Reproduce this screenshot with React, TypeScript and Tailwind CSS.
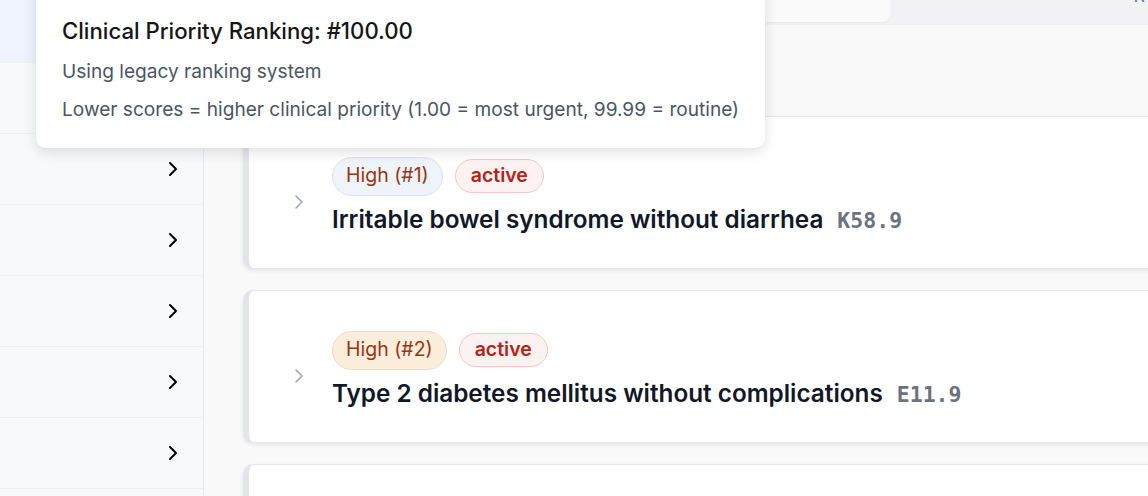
import React from "react";

const Chevron = ({ className, sw = 2 }: { className?: string; sw?: number }) => (
  <svg width="24" height="24" viewBox="0 0 24 24" fill="none" stroke="currentColor" strokeWidth={sw} strokeLinecap="round" strokeLinejoin="round" className={className}>
    <path d="m9 18 6-6-6-6" />
  </svg>
);

const cards = [
  { rank: "High (#1)", rankCls: "bg-[#eff4fb] border-[#dde3ec]", title: "Irritable bowel syndrome without diarrhea", code: "K58.9" },
  { rank: "High (#2)", rankCls: "bg-[#fdeedb] border-[#e6ddd2]", title: "Type 2 diabetes mellitus without complications", code: "E11.9" },
  { rank: "", rankCls: "", title: "", code: "" },
];

export default function App() {
  return (
    <div className="relative w-[1148px] h-[496px] overflow-hidden flex font-['Inter',sans-serif]">
      <aside className="w-[204px] shrink-0 bg-[#f8f9fb] border-r border-[#e5e7eb] flex flex-col">
        <div className="h-[63px] shrink-0 bg-[#eef3fd] border-b border-[#eef0f2]" />
        {[0, 1, 2, 3, 4, 5].map((i) => (
          <div key={i} className="h-[71px] shrink-0 border-b border-[#eef0f2] flex items-center justify-end pr-[18px]">
            {i > 0 && <Chevron className="text-black" />}
          </div>
        ))}
      </aside>
      <main className="flex-1 bg-[#f9f9f9] flex flex-col min-w-0">
        <div className="h-[25px] shrink-0 bg-[#f2f2f5] flex">
          <div className="ml-[20px] w-[666px] h-[22px] bg-[#fafafa] rounded-br-[8px] shadow-[0_1px_2px_rgba(0,0,0,0.04)]" />
          <div className="flex-1 relative overflow-hidden">
            <span className="absolute right-[3px] top-[-14px] text-[18px] leading-[20px] text-[#6b7280]">R</span>
          </div>
        </div>
        <div className="h-[91px] shrink-0" />
        <div className="pl-[39px] flex flex-col gap-[21px] w-[1000px]">
          {cards.map((c, i) => (
            <div key={i} className="h-[153px] shrink-0 bg-white rounded-[10px] border border-[#e5e7eb] border-l-[6px] border-l-[#e4e5ea] shadow-[0_2px_4px_rgba(0,0,0,0.08)] flex items-center pl-[38px]">
              {c.title && (
                <>
                  <Chevron className="text-[#9ca3af] mt-[18px]" sw={1.5} />
                  <div className="ml-[21px] flex flex-col gap-[7px] mt-[8px]">
                    <div className="flex items-center gap-[12px]">
                      <span className={`h-[39px] px-[13px] rounded-full border flex items-center text-[19.5px] text-[#9a3412] ${c.rankCls}`}>{c.rank}</span>
                      <span className="h-[34px] px-[15px] rounded-full border border-[#f5c6c6] bg-[#fdf2f2] flex items-center text-[19.5px] font-semibold text-[#b42318]">active</span>
                    </div>
                    <div className="flex items-baseline gap-[14px] leading-[32px]">
                      <span className="text-[24.3px] font-semibold text-[#111827]">{c.title}</span>
                      <span className="text-[21.5px] font-bold text-[#6b7280] font-['DejaVu_Sans_Mono',monospace]">{c.code}</span>
                    </div>
                  </div>
                </>
              )}
            </div>
          ))}
        </div>
      </main>
      <div className="absolute left-[36px] top-[-20px] w-[729px] h-[168px] bg-white rounded-[10px] shadow-[0_4px_14px_rgba(0,0,0,0.12)] pl-[26px] pt-[36px]">
        <div className="text-[22.2px] font-medium text-[#161616] leading-[30px]">Clinical Priority Ranking: #100.00</div>
        <div className="mt-[11px] text-[19.1px] text-[#4b5563] leading-[28px]">Using legacy ranking system</div>
        <div className="mt-[10px] text-[19.1px] text-[#4b5563] leading-[28px]">Lower scores = higher clinical priority (1.00 = most urgent, 99.99 = routine)</div>
      </div>
    </div>
  );
}
